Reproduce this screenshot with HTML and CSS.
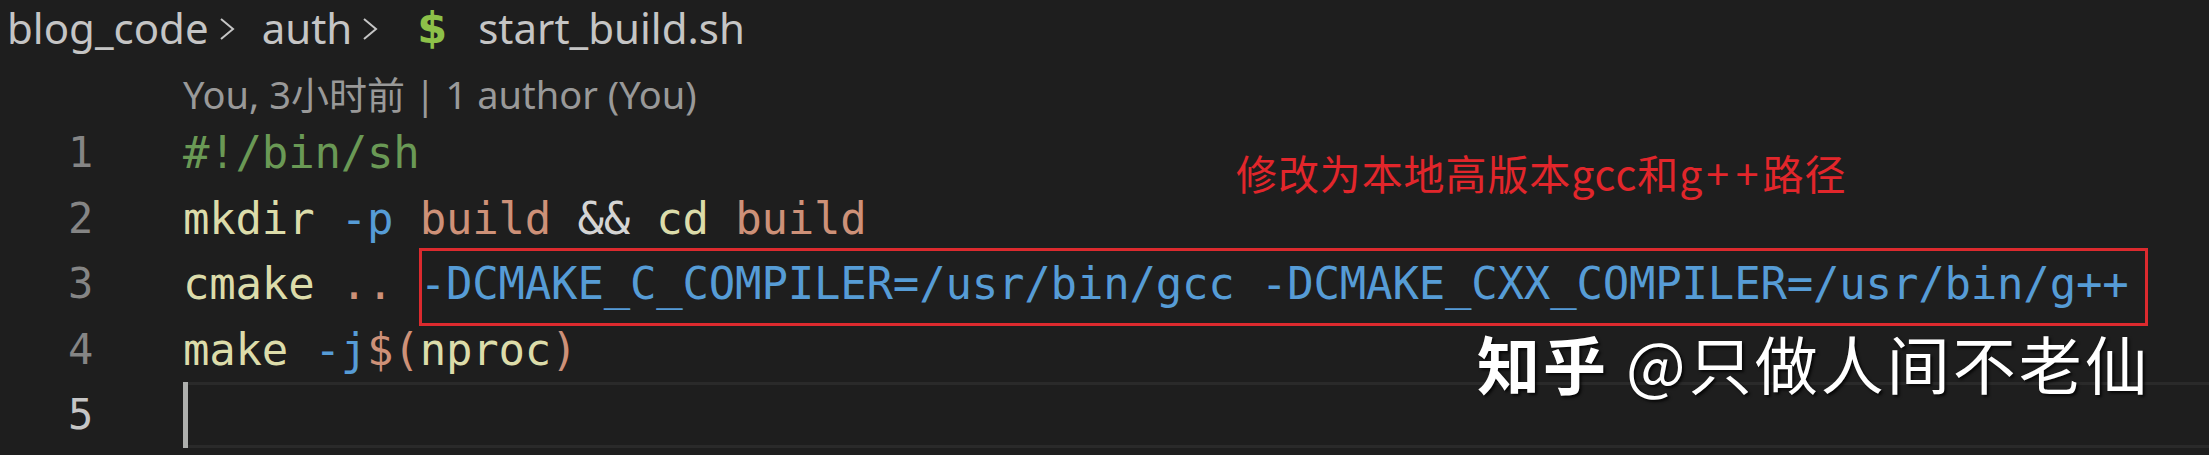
FILE: index.html
```html
<!DOCTYPE html>
<html lang="zh-CN">
<head>
<meta charset="utf-8">
<title>start_build.sh</title>
<link rel="stylesheet" href="styles.css">
</head>
<body>
<div class="editor">
  <nav class="breadcrumbs">
    <span class="crumb">blog_code</span>
    <svg class="chev" viewBox="0 0 18 22" width="18" height="22"><polyline points="3,1 15,11 3,21" fill="none" stroke="#c5c5c5" stroke-width="2"/></svg>
    <span class="crumb">auth</span>
    <svg class="chev" viewBox="0 0 18 22" width="18" height="22"><polyline points="3,1 15,11 3,21" fill="none" stroke="#c5c5c5" stroke-width="2"/></svg>
    <span class="file-icon">$</span>
    <span class="crumb">start_build.sh</span>
  </nav>
  <div class="codelens">You, 3小时前 | 1 author (You)</div>
  <div class="lines">
    <div class="line"><span class="ln">1</span><span class="code"><span class="t-comment">#!/bin/sh</span></span></div>
    <div class="line"><span class="ln">2</span><span class="code"><span class="t-fn">mkdir</span> <span class="t-kw">-p</span> <span class="t-str">build</span> <span class="t-op">&amp;&amp;</span> <span class="t-fn">cd</span> <span class="t-str">build</span></span></div>
    <div class="line"><span class="ln">3</span><span class="code"><span class="t-fn">cmake</span> <span class="t-str">..</span> <span class="t-kw">-DCMAKE_C_COMPILER=/usr/bin/gcc</span> <span class="t-kw">-DCMAKE_CXX_COMPILER=/usr/bin/g++</span></span></div>
    <div class="line"><span class="ln">4</span><span class="code"><span class="t-fn">make</span> <span class="t-kw">-j</span><span class="t-str">$(</span><span class="t-fn">nproc</span><span class="t-str">)</span></span></div>
    <div class="line current"><span class="ln">5</span><span class="code"><span class="cursor"></span></span></div>
  </div>
  <div class="annot-box"></div>
  <div class="annot-text">修改为本地高版本gcc和g<span class="plus">+</span><span class="plus">+</span>路径</div>
  <div class="watermark"><span class="wm-logo">知乎</span> @只做人间不老仙</div>
</div>
</body>
</html>
```

FILE: styles.css
```css
html, body {
  margin: 0;
  padding: 0;
  background: #1e1e1e;
}

.editor {
  position: relative;
  width: 2209px;
  height: 455px;
  overflow: hidden;
  background: #1e1e1e;
}

.breadcrumbs {
  display: flex;
  align-items: center;
  height: 55px;
  padding-left: 7px;
  font-family: "Noto Sans", "Noto Sans CJK SC", sans-serif;
  font-size: 42px;
  line-height: 52px;
  color: #c5c5c5;
}

.chev {
  margin: 3px 26px 0 9px;
  flex: none;
}

.file-icon {
  font-family: "DejaVu Sans", sans-serif;
  font-weight: bold;
  font-size: 43px;
  color: #8dc149;
  margin: 0 31px 0 12px;
}

.codelens {
  height: 65px;
  box-sizing: border-box;
  padding: 14px 0 0 183px;
  font-family: "Noto Sans", "Noto Sans CJK SC", sans-serif;
  font-size: 38px;
  line-height: 51px;
  color: #999999;
  white-space: nowrap;
}

.lines {
  font-family: "DejaVu Sans Mono", "Liberation Mono", monospace;
  font-size: 44px;
  letter-spacing: -0.2px;
}

.line {
  display: grid;
  grid-template-columns: 93px 1fr;
  column-gap: 90px;
  height: 65.6px;
  line-height: 65.6px;
  white-space: pre;
}

.ln {
  text-align: right;
  color: #858585;
  font-size: 42px;
}

.line.current .ln {
  color: #c6c6c6;
}

.code {
  color: #d4d4d4;
}

.line.current .code {
  box-sizing: border-box;
  border-top: 3px solid #2a2a2a;
  border-bottom: 3px solid #2a2a2a;
  height: 66px;
  display: flex;
}

.cursor {
  width: 5px;
  height: 66px;
  margin-top: -3px;
  background: #aeafad;
}

.t-comment { color: #6a9955; }
.t-fn { color: #dcdcaa; }
.t-kw { color: #569cd6; }
.t-str { color: #ce9178; }
.t-op { color: #d4d4d4; }

.annot-box {
  position: absolute;
  left: 419px;
  top: 248px;
  width: 1729px;
  height: 78px;
  box-sizing: border-box;
  border: 3px solid #dc2a2e;
}

.annot-text {
  position: absolute;
  left: 1236px;
  top: 150px;
  font-family: "Noto Sans CJK SC", sans-serif;
  font-size: 41px;
  line-height: 44px;
  letter-spacing: 0.9px;
  color: #e2262b;
  white-space: nowrap;
}

.plus {
  display: inline-block;
  margin: 0 3px;
}

.watermark {
  position: absolute;
  left: 1477px;
  top: 326px;
  font-family: "Noto Sans CJK SC", sans-serif;
  font-size: 63px;
  line-height: 72px;
  letter-spacing: 3px;
  color: #ffffff;
  white-space: nowrap;
  text-shadow: 2px 2px 3px rgba(0, 0, 0, 0.8);
}

.wm-logo {
  font-weight: 700;
}
```
